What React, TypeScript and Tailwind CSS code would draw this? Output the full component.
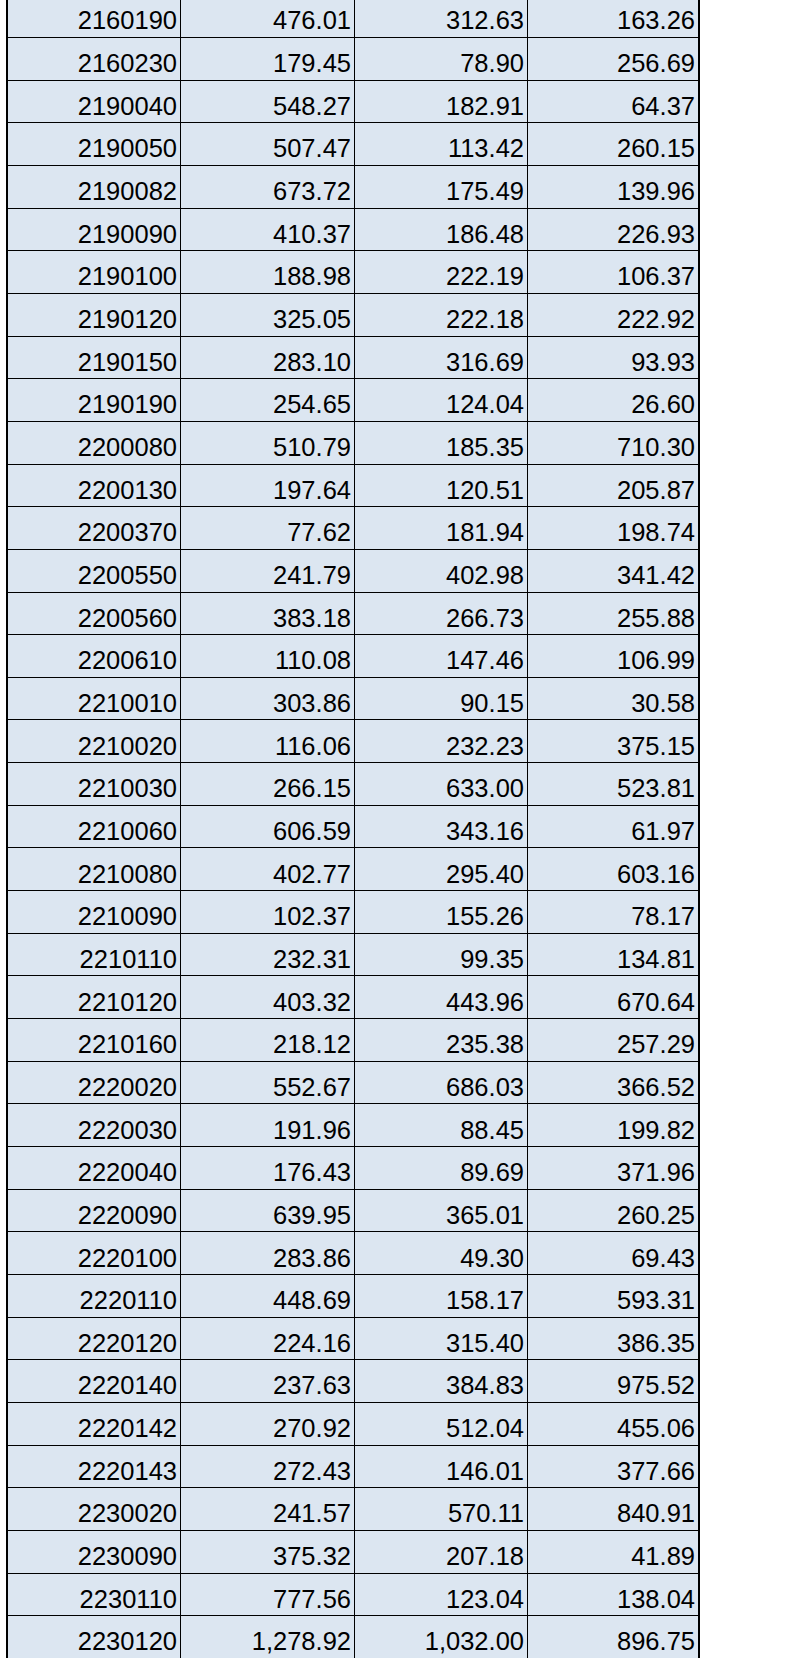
import React from 'react';

const rows: [string, string, string, string][] = [
  ['2160190', '476.01', '312.63', '163.26'],
  ['2160230', '179.45', '78.90', '256.69'],
  ['2190040', '548.27', '182.91', '64.37'],
  ['2190050', '507.47', '113.42', '260.15'],
  ['2190082', '673.72', '175.49', '139.96'],
  ['2190090', '410.37', '186.48', '226.93'],
  ['2190100', '188.98', '222.19', '106.37'],
  ['2190120', '325.05', '222.18', '222.92'],
  ['2190150', '283.10', '316.69', '93.93'],
  ['2190190', '254.65', '124.04', '26.60'],
  ['2200080', '510.79', '185.35', '710.30'],
  ['2200130', '197.64', '120.51', '205.87'],
  ['2200370', '77.62', '181.94', '198.74'],
  ['2200550', '241.79', '402.98', '341.42'],
  ['2200560', '383.18', '266.73', '255.88'],
  ['2200610', '110.08', '147.46', '106.99'],
  ['2210010', '303.86', '90.15', '30.58'],
  ['2210020', '116.06', '232.23', '375.15'],
  ['2210030', '266.15', '633.00', '523.81'],
  ['2210060', '606.59', '343.16', '61.97'],
  ['2210080', '402.77', '295.40', '603.16'],
  ['2210090', '102.37', '155.26', '78.17'],
  ['2210110', '232.31', '99.35', '134.81'],
  ['2210120', '403.32', '443.96', '670.64'],
  ['2210160', '218.12', '235.38', '257.29'],
  ['2220020', '552.67', '686.03', '366.52'],
  ['2220030', '191.96', '88.45', '199.82'],
  ['2220040', '176.43', '89.69', '371.96'],
  ['2220090', '639.95', '365.01', '260.25'],
  ['2220100', '283.86', '49.30', '69.43'],
  ['2220110', '448.69', '158.17', '593.31'],
  ['2220120', '224.16', '315.40', '386.35'],
  ['2220140', '237.63', '384.83', '975.52'],
  ['2220142', '270.92', '512.04', '455.06'],
  ['2220143', '272.43', '146.01', '377.66'],
  ['2230020', '241.57', '570.11', '840.91'],
  ['2230090', '375.32', '207.18', '41.89'],
  ['2230110', '777.56', '123.04', '138.04'],
  ['2230120', '1,278.92', '1,032.00', '896.75'],
];

export default function App() {
  return (
    <div className="h-[1658px] overflow-hidden bg-white">
      <div
        className="ml-[6px] mt-[-4.7px] w-[694px] border-x-2 border-black bg-[#dce6f1] text-black"
        style={{ fontFamily: '"Liberation Sans", Arial, sans-serif' }}
      >
        {rows.map((r) => (
          <div
            key={r[0]}
            className="grid h-[42.66px] grid-cols-[173px_174px_173px_170px] border-b border-black"
          >
            {r.map((v, i) => (
              <div
                key={i}
                className={
                  'flex items-end justify-end pr-[3px] pb-[3.5px] text-[25.5px] leading-[25px] ' +
                  (i < 3 ? 'border-r border-black' : '')
                }
              >
                {v}
              </div>
            ))}
          </div>
        ))}
      </div>
    </div>
  );
}
